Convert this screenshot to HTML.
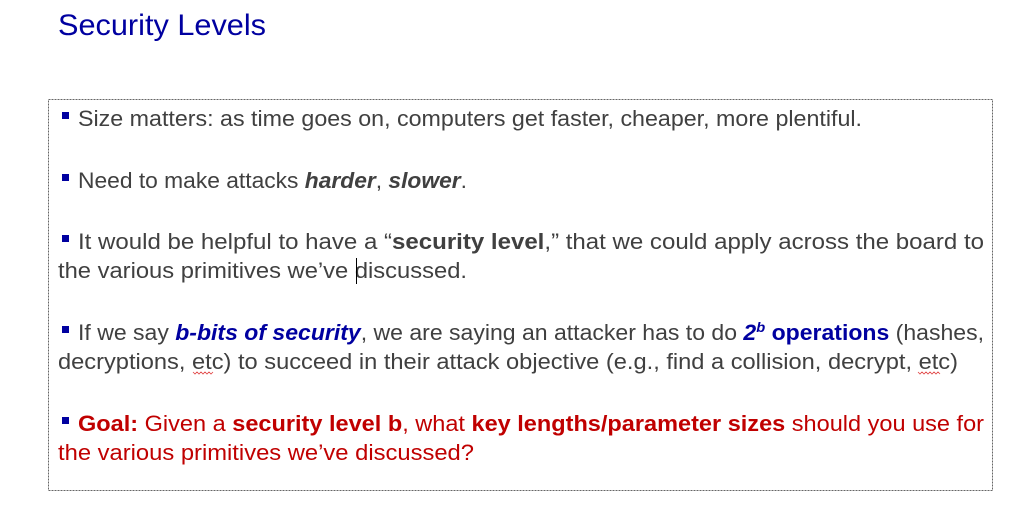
<!DOCTYPE html>
<html><head><meta charset="utf-8"><style>
html,body{margin:0;padding:0;background:#fff;}
svg{display:block;}
text{font-family:"Liberation Sans",sans-serif;font-size:22px;fill:#404040;}
.b{font-weight:bold;}
.bi{font-weight:bold;font-style:italic;}
.r{fill:#c00000;}
.bl{fill:#0000a0;}
</style></head><body>
<svg width="1030" height="507" viewBox="0 0 1030 507">
<text x="58" y="35" style="font-size:30px;fill:#0000a0" textLength="208" lengthAdjust="spacingAndGlyphs">Security Levels</text>
<rect x="48.5" y="99.5" width="944" height="391" fill="none" stroke="#666" stroke-width="1" stroke-dasharray="2,1"/>
<rect x="62" y="112" width="7" height="7" fill="#0000a0"/>
<rect x="62" y="174" width="7" height="7" fill="#0000a0"/>
<rect x="62" y="235" width="7" height="7" fill="#0000a0"/>
<rect x="62" y="326" width="7" height="7" fill="#0000a0"/>
<rect x="62" y="417" width="7" height="7" fill="#0000a0"/>
<text x="78" y="126" textLength="784" lengthAdjust="spacingAndGlyphs">Size matters: as time goes on, computers get faster, cheaper, more plentiful.</text>
<text x="78" y="188" textLength="389" lengthAdjust="spacingAndGlyphs">Need to make attacks <tspan class="bi">harder</tspan>, <tspan class="bi">slower</tspan>.</text>
<text x="78" y="249" textLength="906" lengthAdjust="spacingAndGlyphs">It would be helpful to have a “<tspan class="b">security level</tspan>,” that we could apply across the board to</text>
<text x="58" y="278" textLength="409" lengthAdjust="spacingAndGlyphs">the various  primitives we’ve discussed.</text>
<rect x="356" y="258" width="1" height="26" fill="#000"/>
<text x="78" y="340" textLength="906" lengthAdjust="spacingAndGlyphs">If we say <tspan class="bi bl">b-bits of security</tspan>, we are saying an attacker has to do <tspan class="bi bl">2</tspan><tspan class="bi bl" dy="-8" style="font-size:14px">b</tspan><tspan class="b bl" dy="8"> operations</tspan> (hashes,</text>
<text x="58" y="369" textLength="900" lengthAdjust="spacingAndGlyphs">decryptions, etc) to succeed in their attack objective (e.g., find a  collision, decrypt, etc)</text>
<path d="M193 372 l2 2 l2 -2 l2 2 l2 -2 l2 2 l2 -2 l2 2 l2 -2 l2 2 l2 -2 M918 372 l2 2 l2 -2 l2 2 l2 -2 l2 2 l2 -2 l2 2 l2 -2 l2 2 l2 -2 l2 2" stroke="#e04040" stroke-width="0.8" fill="none"/>
<text x="78" y="431" class="r" textLength="906" lengthAdjust="spacingAndGlyphs"><tspan class="b">Goal:</tspan> Given a <tspan class="b">security level b</tspan>, what <tspan class="b">key lengths/parameter sizes</tspan> should you use for</text>
<text x="58" y="460" class="r" textLength="416" lengthAdjust="spacingAndGlyphs">the various  primitives we’ve discussed?</text>
</svg>
</body></html>
